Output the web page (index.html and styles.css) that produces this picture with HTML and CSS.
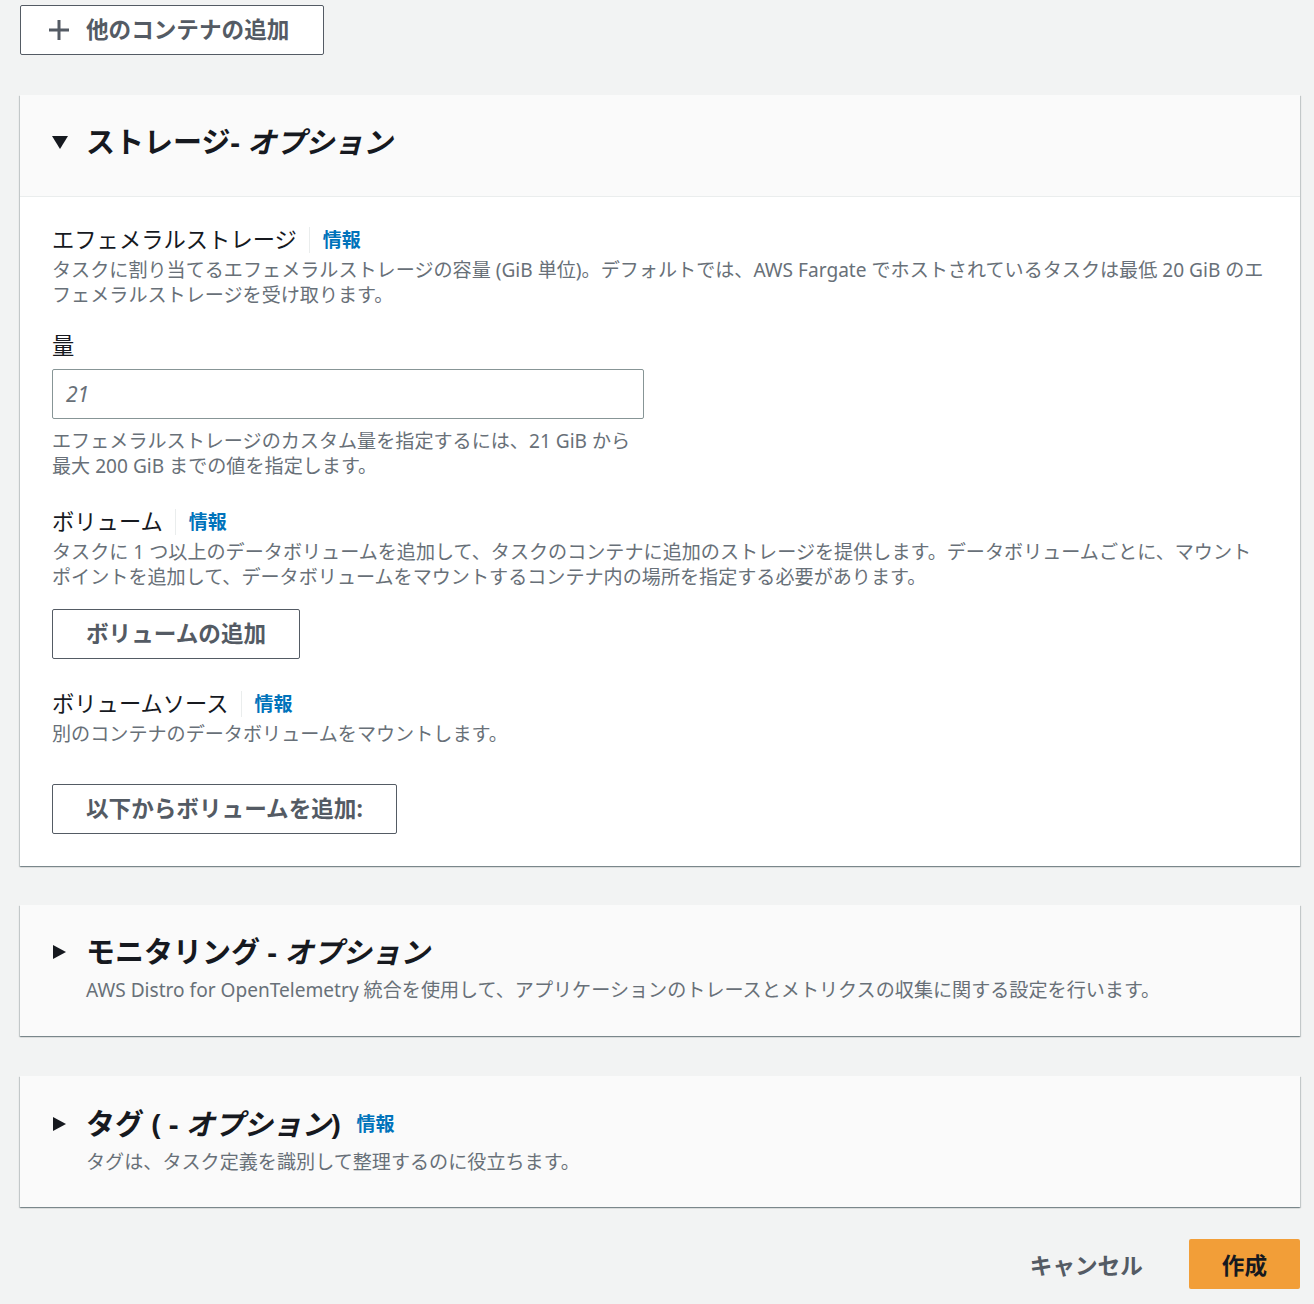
FILE: index.html
```html
<!DOCTYPE html>
<html lang="ja">
<head>
<meta charset="utf-8">
<title>ストレージ</title>
<link rel="stylesheet" href="styles.css">
</head>
<body>
<div class="page">
  <button class="btn btn-add"><svg class="plus" viewBox="0 0 22 22" width="22" height="22"><path d="M11 1v20M1 11h20" stroke="#545b64" stroke-width="3" fill="none"/></svg><span>他のコンテナの追加</span></button>

  <section class="card card-open">
    <div class="card-head">
      <span class="tri tri-down"></span>
      <h2 class="card-title">ストレージ- <i>オプション</i></h2>
    </div>
    <div class="card-body">
      <div class="field">
        <div class="label-row"><span class="label">エフェメラルストレージ</span><span class="sep"></span><a class="info">情報</a></div>
        <p class="desc">タスクに割り当てるエフェメラルストレージの容量 (GiB 単位)。デフォルトでは、AWS Fargate でホストされているタスクは最低 20 GiB のエフェメラルストレージを受け取ります。</p>
      </div>
      <div class="field field-amount">
        <div class="label-row"><span class="label">量</span></div>
        <div class="input"><span class="placeholder">21</span></div>
        <p class="desc hint">エフェメラルストレージのカスタム量を指定するには、21 GiB から最大 200 GiB までの値を指定します。</p>
      </div>
      <div class="field field-volume">
        <div class="label-row"><span class="label">ボリューム</span><span class="sep"></span><a class="info">情報</a></div>
        <p class="desc">タスクに 1 つ以上のデータボリュームを追加して、タスクのコンテナに追加のストレージを提供します。データボリュームごとに、マウントポイントを追加して、データボリュームをマウントするコンテナ内の場所を指定する必要があります。</p>
        <button class="btn btn-vol">ボリュームの追加</button>
      </div>
      <div class="field field-source">
        <div class="label-row"><span class="label">ボリュームソース</span><span class="sep"></span><a class="info">情報</a></div>
        <p class="desc">別のコンテナのデータボリュームをマウントします。</p>
        <button class="btn btn-from">以下からボリュームを追加:</button>
      </div>
    </div>
  </section>

  <section class="card card-closed">
    <div class="closed-head">
      <span class="tri tri-right"></span>
      <h2 class="card-title">モニタリング - <i>オプション</i></h2>
    </div>
    <p class="desc closed-desc">AWS Distro for OpenTelemetry 統合を使用して、アプリケーションのトレースとメトリクスの収集に関する設定を行います。</p>
  </section>

  <section class="card card-closed">
    <div class="closed-head">
      <span class="tri tri-right"></span>
      <h2 class="card-title">タグ ( - <i>オプション</i>)</h2>
      <a class="info title-info">情報</a>
    </div>
    <p class="desc closed-desc">タグは、タスク定義を識別して整理するのに役立ちます。</p>
  </section>

  <div class="actions">
    <button class="btn-link">キャンセル</button>
    <button class="btn-primary">作成</button>
  </div>
</div>
</body>
</html>
```

FILE: styles.css
```css
* { box-sizing: border-box; }
body {
  margin: 0;
  background: #f2f3f3;
  font-family: "Noto Sans", "Noto Sans CJK JP", sans-serif;
  color: #16191f;
}
.page {
  width: 1280px;
  margin-left: 20px;
  padding-top: 5px;
  padding-bottom: 16px;
}
p { margin: 0; }
.btn {
  display: inline-flex;
  align-items: center;
  height: 50px;
  padding: 0 33px;
  background: #fff;
  border: 1px solid #545b64;
  border-radius: 2px;
  color: #545b64;
  font-family: inherit;
  font-size: 22.6px;
  font-weight: 700;
  line-height: 1;
}
.btn-add {
  padding: 0 34px 0 27px;
  gap: 16px;
}
.plus { display: block; }
.card {
  background: #fff;
  box-shadow: 0 1px 1px 0 rgba(0,28,36,.3), 1px 1px 1px 0 rgba(0,28,36,.15), -1px 1px 1px 0 rgba(0,28,36,.15);
}
.card-open { margin-top: 40px; }
.card-head {
  display: flex;
  align-items: center;
  background: #fafafa;
  border-bottom: 1px solid #eaeded;
  padding: 27px 32px 34px;
}
.card-title {
  margin: 0;
  font-size: 29px;
  line-height: 40px;
  font-weight: 700;
  color: #16191f;
}
.card-title i { font-style: italic; }
.tri {
  display: block;
  width: 0;
  height: 0;
  margin-right: 18px;
}
.tri-down {
  border-left: 8px solid transparent;
  border-right: 8px solid transparent;
  border-top: 13px solid #16191f;
}
.tri-right {
  border-top: 7px solid transparent;
  border-bottom: 7px solid transparent;
  border-left: 13px solid #16191f;
  margin-left: 1px;
  margin-right: 20px;
}
.card-body {
  padding: 28px 32px 32px;
}
.label-row {
  display: flex;
  align-items: center;
  height: 30px;
}
.label {
  font-size: 22.3px;
  line-height: 30px;
  color: #16191f;
}
.sep {
  width: 1px;
  height: 26px;
  background: #eaeded;
  margin: 0 13px 0 12px;
}
.info {
  color: #0073bb;
  font-weight: 700;
  font-size: 19px;
  line-height: 30px;
}
.desc {
  margin-top: 3px;
  font-size: 19.1px;
  line-height: 25px;
  color: #687078;
}
.field-amount { margin-top: 23px; }
.input {
  margin-top: 8px;
  width: 592px;
  height: 50px;
  border: 1px solid #879596;
  border-radius: 2px;
  display: flex;
  align-items: center;
  padding-left: 13px;
}
.placeholder {
  font-style: italic;
  font-size: 21px;
  color: #687078;
}
.hint {
  margin-top: 10px;
  width: 592px;
}
.field-volume { margin-top: 28px; }
.btn-vol { margin-top: 19px; }
.field-source { margin-top: 30px; }
.btn-from { margin-top: 37px; }

.card-closed {
  background: #fafafa;
  padding: 27px 32px 33px;
  margin-top: 39px;
}
.card-closed + .card-closed { margin-top: 40px; padding-top: 28px; padding-bottom: 32px; }
.closed-head {
  display: flex;
  align-items: center;
}
.title-info { margin-left: 16px; }
.closed-desc {
  margin-top: 6px;
  padding-left: 34px;
}
.actions {
  margin-top: 32px;
  display: flex;
  justify-content: flex-end;
  align-items: center;
  gap: 12px;
}
.btn-link {
  background: none;
  border: none;
  height: 50px;
  padding: 0 34px;
  font-family: inherit;
  font-size: 22.6px;
  font-weight: 700;
  color: #545b64;
}
.btn-primary {
  height: 50px;
  padding: 0 33px;
  background: #f29e38;
  border: none;
  border-radius: 2px;
  font-family: inherit;
  font-size: 22.6px;
  font-weight: 700;
  color: #16191f;
}
```
